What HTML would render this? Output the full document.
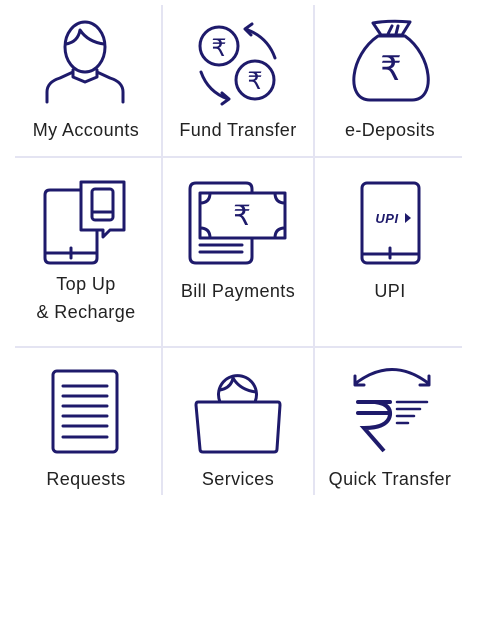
<!DOCTYPE html>
<html><head><meta charset="utf-8"><style>
html,body{margin:0;padding:0;background:#fff;width:480px;height:640px;overflow:hidden}
.l{position:absolute;font-family:"Liberation Sans",Arial,sans-serif;font-size:18px;letter-spacing:0.4px;color:#222;text-align:center;width:152px;line-height:28px}
</style></head><body>
<svg width="480" height="640" style="position:absolute;left:0;top:0">
<g stroke="#e4e4f2" stroke-width="2">
<line x1="162" y1="5" x2="162" y2="495"/>
<line x1="314" y1="5" x2="314" y2="495"/>
<line x1="15" y1="157" x2="462" y2="157"/>
<line x1="15" y1="347" x2="462" y2="347"/>
</g>
<g fill="none" stroke="#1e1a6b" stroke-width="3" stroke-linecap="round" stroke-linejoin="round">
<ellipse cx="85" cy="47" rx="20" ry="25"/>
<path d="M66,44 Q78,42 80,30 Q88,42 104,44"/>
<path d="M47,102 L47,92 Q47,82 60,78 L73,72"/>
<path d="M123,102 L123,92 Q123,82 110,78 L97,72"/>
<path d="M73,70 L73,77 L85,82 L97,77 L97,70"/>
<circle cx="219" cy="46" r="19"/>
<circle cx="255" cy="80" r="19"/>
<path d="M248,30 Q268,38 275,58"/>
<path d="M252,24 L245,29 L251,35"/>
<path d="M201,72 Q208,92 228,99"/>
<path d="M222,93 L229,99 L222,104"/>
<path d="M378,36 C350,55 345,100 370,100 L412,100 C437,100 432,55 405,36 Z"/>
<path d="M373,23 Q391,20 410,22 L402,35 L381,35 Z"/>
<path d="M388,34 L392,26 M396,34 L398,26"/>
<path d="M81,190 L50,190 Q45,190 45,195 L45,258 Q45,263 50,263 L92,263 Q97,263 97,258 L97,230"/>
<line x1="45" y1="253" x2="97" y2="253"/>
<line x1="71" y1="248" x2="71" y2="258"/>
<path d="M81,182 L124,182 L124,230 L110,230 L103,237 L103,230 L81,230 Z"/>
<rect x="92" y="189" width="21" height="31" rx="3"/>
<line x1="92" y1="212" x2="113" y2="212"/>
<path d="M252,193 L252,189 Q252,183 246,183 L196,183 Q190,183 190,189 L190,257 Q190,263 196,263 L246,263 Q252,263 252,257 L252,238"/>
<line x1="200" y1="245" x2="242" y2="245"/>
<line x1="200" y1="252" x2="242" y2="252"/>
<rect x="200" y="193" width="85" height="45"/>
<path d="M200,203 Q210,203 210,193 M275,193 Q275,203 285,203 M200,228 Q210,228 210,238 M275,238 Q275,228 285,228"/>
<rect x="362" y="183" width="57" height="80" rx="5"/>
<line x1="362" y1="254" x2="419" y2="254"/>
<line x1="390" y1="248" x2="390" y2="258"/>
<rect x="53" y="371" width="64" height="81" rx="4"/>
<path d="M63,386 H107 M63,396 H107 M63,406 H107 M63,416 H107 M63,426 H107 M63,437 H107"/>
<path d="M220,402 A19,19 0 1 1 255,402"/>
<path d="M220,390 Q231,388 233,378 Q240,390 256,392"/>
<path d="M198,402 L278,402 Q280,402 280,405 L277,449 Q277,452 274,452 L203,452 Q200,452 200,449 L196,405 Q196,402 198,402 Z"/>
<path d="M356,383 Q392,356 428,383"/>
<path d="M355,376 L355,385 L364,385"/>
<path d="M429,376 L429,385 L420,385"/>
</g>
<g fill="none" stroke="#1e1a6b" stroke-linecap="round">
<path d="M358,402 H390 M358,413 H390" stroke-width="4"/>
<path d="M375,402 Q391,404 390,415 Q388,428 364,428 L384,451" stroke-width="4" stroke-linecap="butt"/>
<path d="M397,402 H427 M397,409 H420 M397,416 H414 M397,423 H408" stroke-width="2.5"/>
</g>
<g font-family="Liberation Sans,DejaVu Sans,sans-serif" fill="#1e1a6b" text-anchor="middle">
<text x="219" y="56" font-size="24">₹</text>
<text x="255" y="89" font-size="24">₹</text>
<text x="391" y="80" font-size="34">₹</text>
<text x="242" y="225" font-size="28">₹</text>
<text x="387" y="223" font-size="13" font-style="italic" font-weight="bold" letter-spacing="0.5">UPI</text>
<path d="M405,213 L411,218 L405,223 Z" fill="#1e1a6b"/>
</g>
</svg>
<div class="l" style="left:10px;top:116px">My Accounts</div>
<div class="l" style="left:162px;top:116px">Fund Transfer</div>
<div class="l" style="left:314px;top:116px">e-Deposits</div>
<div class="l" style="left:10px;top:270px">Top Up<br>&amp; Recharge</div>
<div class="l" style="left:162px;top:277px">Bill Payments</div>
<div class="l" style="left:314px;top:277px">UPI</div>
<div class="l" style="left:10px;top:465px">Requests</div>
<div class="l" style="left:162px;top:465px">Services</div>
<div class="l" style="left:314px;top:465px">Quick Transfer</div>
</body></html>
